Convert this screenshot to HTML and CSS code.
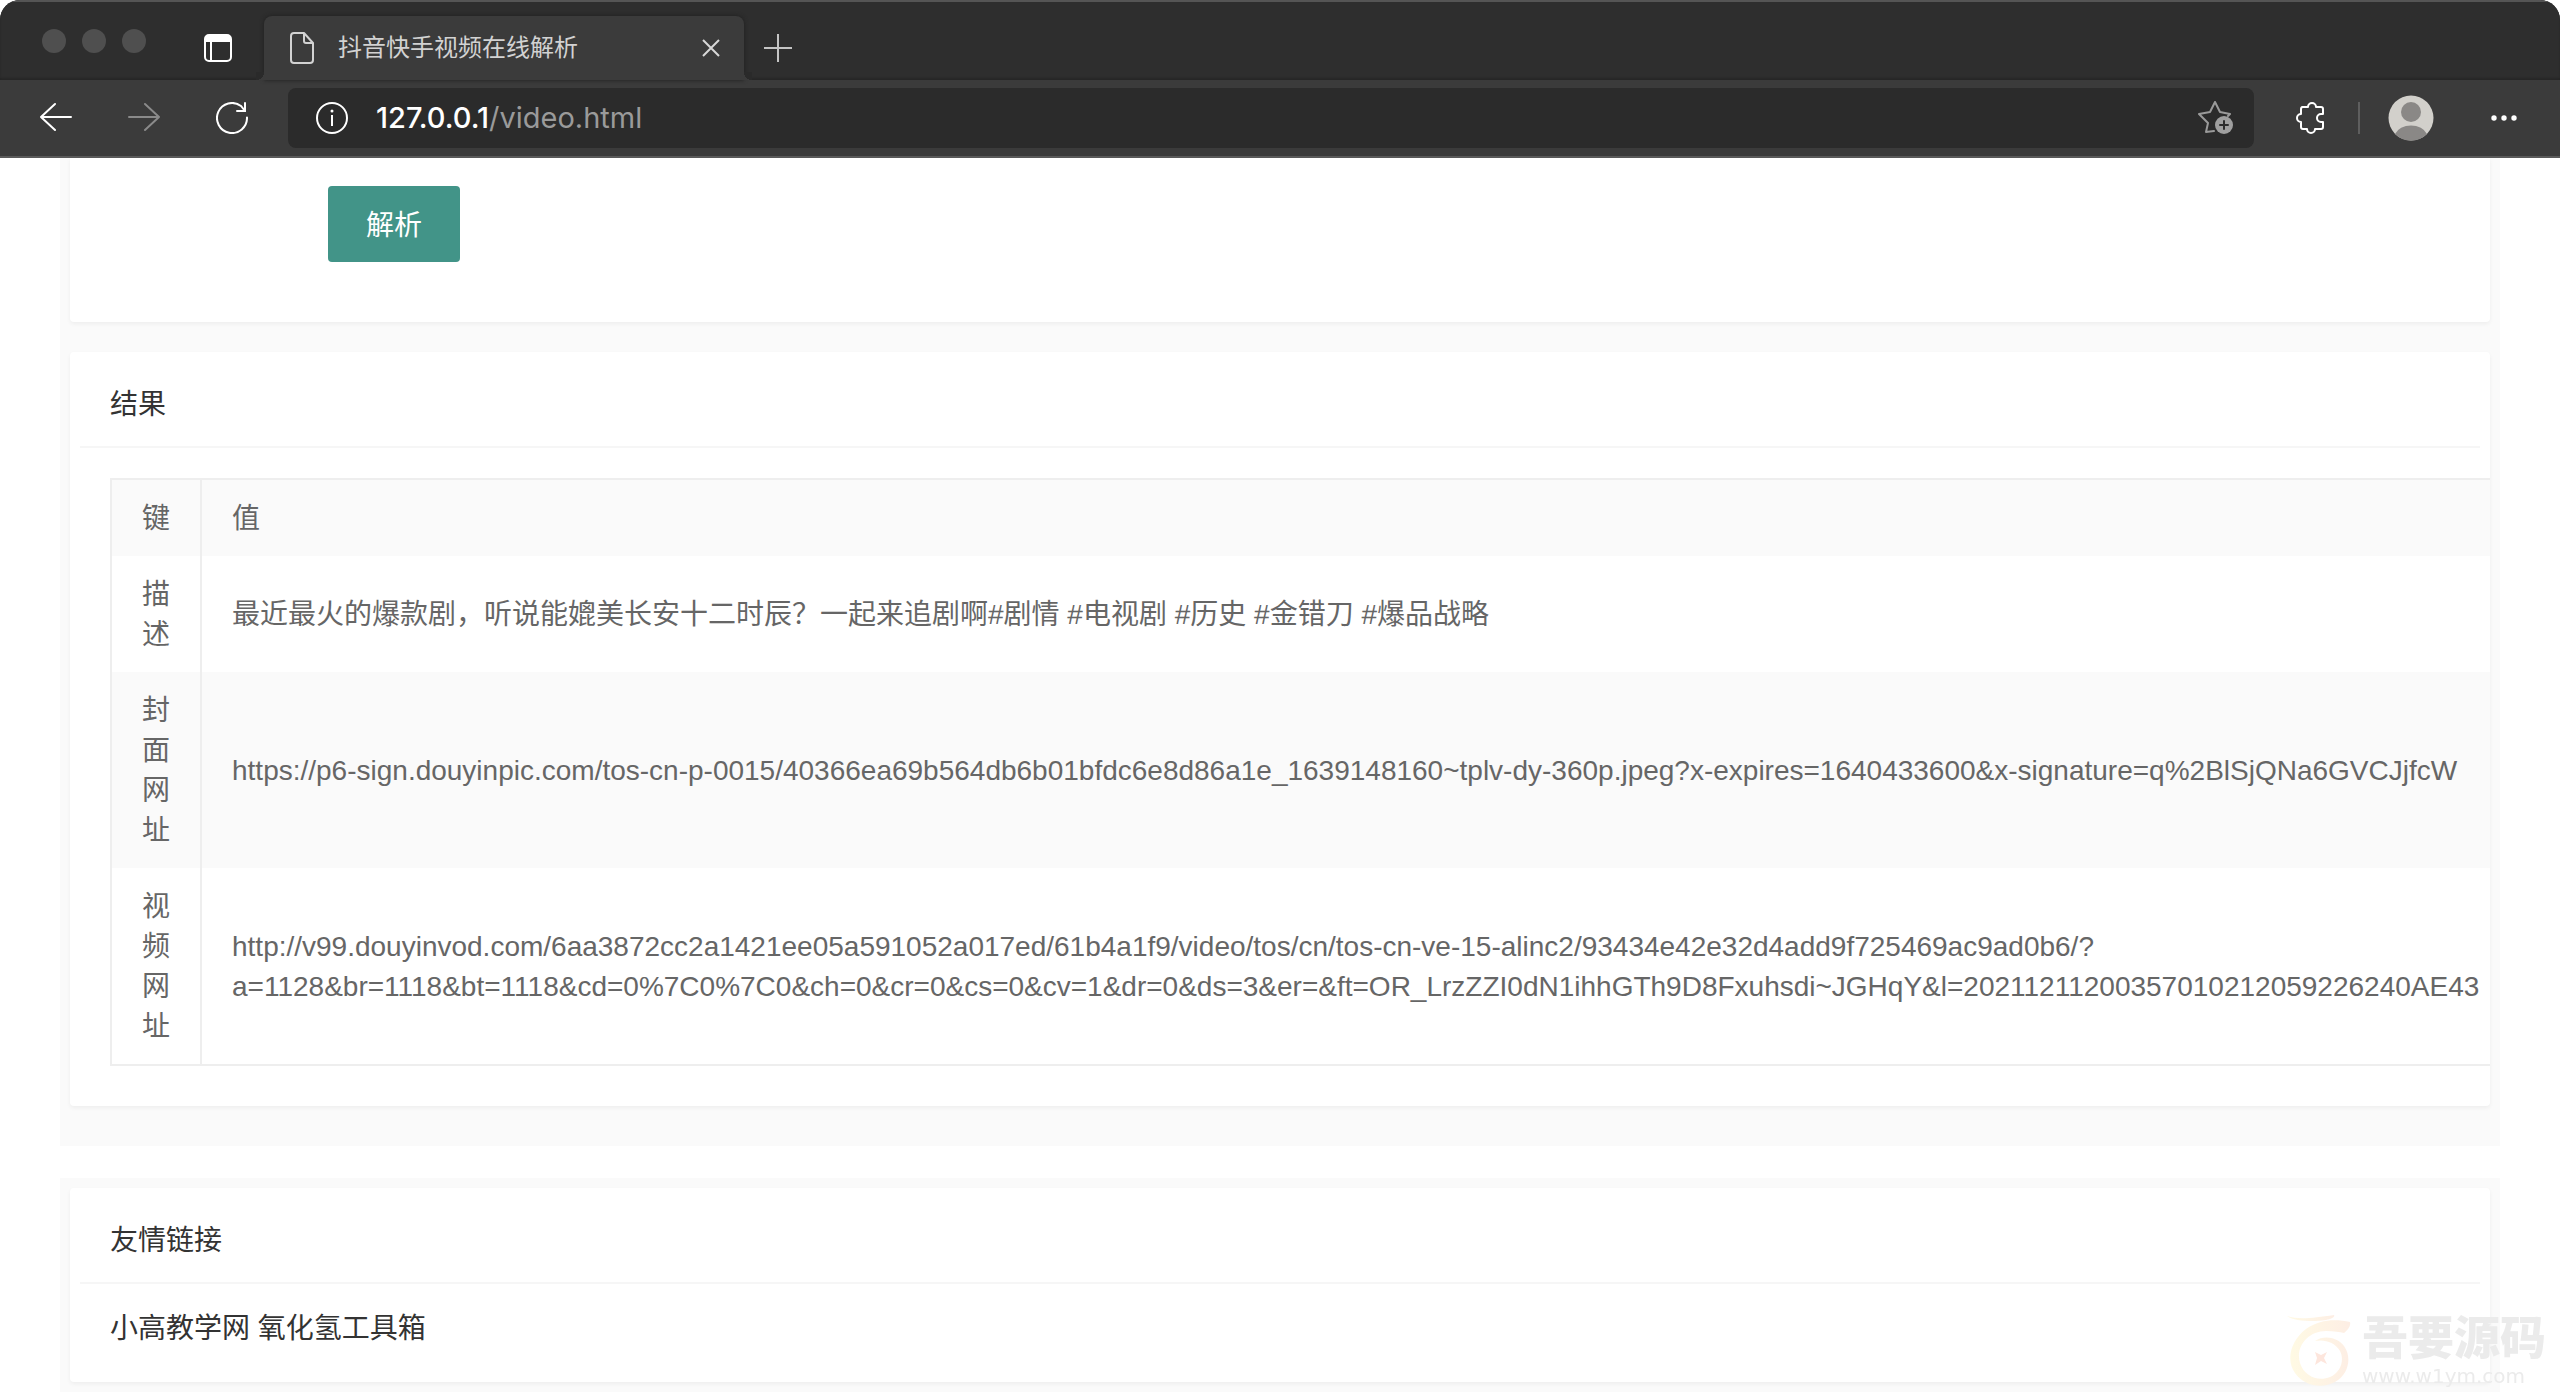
FILE: index.html
```html
<!DOCTYPE html>
<html lang="zh-CN">
<head>
<meta charset="utf-8">
<meta name="viewport" content="width=device-width, initial-scale=1">
<title>抖音快手视频在线解析</title>
<link rel="stylesheet" href="styles.css">
</head>
<body>
<header class="browser">
  <div class="tabstrip">
    <div class="lights"><span class="light"></span><span class="light"></span><span class="light"></span></div>
    <button class="icon-btn tab-actions" type="button" aria-label="标签页操作">
      <svg width="28" height="28" viewBox="0 0 28 28" fill="none" stroke="#fff" stroke-width="2"><rect x="1" y="1" width="26" height="26" rx="4"/><path d="M2 2h24v6H2z" fill="#fff" stroke="none"/><path d="M7 8v19"/></svg>
    </button>
    <div class="tab">
      <svg width="24" height="32" viewBox="0 0 24 32" fill="none" stroke="#d2d2d2" stroke-width="2" stroke-linejoin="round"><path d="M4 1h10l9 10v17a3 3 0 0 1-3 3H4a3 3 0 0 1-3-3V4a3 3 0 0 1 3-3z"/><path d="M14 1v8a2 2 0 0 0 2 2h7"/></svg>
      <span class="tab-title">抖音快手视频在线解析</span>
      <button class="icon-btn" type="button" aria-label="关闭标签页">
        <svg width="18" height="18" viewBox="0 0 18 18" fill="none" stroke="#d8d8d8" stroke-width="2"><path d="M1 1l16 16M17 1L1 17"/></svg>
      </button>
    </div>
    <button class="icon-btn new-tab" type="button" aria-label="新建标签页">
      <svg width="28" height="28" viewBox="0 0 28 28" fill="none" stroke="#c4c4c4" stroke-width="2"><path d="M14 0v28M0 14h28"/></svg>
    </button>
  </div>
  <div class="toolbar">
    <nav class="nav-buttons" aria-label="导航">
      <button class="icon-btn" type="button" aria-label="后退">
        <svg width="32" height="32" viewBox="0 0 32 32" fill="none" stroke="#fff" stroke-width="2" stroke-linecap="round" stroke-linejoin="round"><path d="M31 15H1M15 2L1 15l14 13"/></svg>
      </button>
      <button class="icon-btn" type="button" aria-label="前进">
        <svg width="32" height="32" viewBox="0 0 32 32" fill="none" stroke="#8a8a8a" stroke-width="2" stroke-linecap="round" stroke-linejoin="round"><path d="M1 15h30M17 2l14 13-14 13"/></svg>
      </button>
      <button class="icon-btn" type="button" aria-label="刷新">
        <svg width="32" height="32" viewBox="0 0 32 32" fill="none" stroke="#fff" stroke-width="2" stroke-linecap="round"><path d="M31 15.500A15 15 0 1 1 25 4l4 5"/><path d="M29 1v8h-8"/></svg>
      </button>
    </nav>
    <div class="address">
      <svg width="32" height="32" viewBox="0 0 32 32" fill="none" stroke="#fff" stroke-width="2"><circle cx="16" cy="16" r="15"/><path d="M16 13v11"/><circle cx="16" cy="9" r="1.500" fill="#fff" stroke="none"/></svg>
      <label class="url"><span class="url-host">127.0.0.1</span><input class="url-path" type="text" value="/video.html" aria-label="地址"></label>
      <button class="icon-btn" type="button" aria-label="添加到收藏夹">
        <svg width="36" height="34" viewBox="0 0 36 34" fill="none" stroke="#9a9a9a" stroke-width="2" stroke-linecap="round" stroke-linejoin="round"><path d="M16 30L8 31l2-9L1 13l11-2 5-10 5 10 10 2-2 2"/><circle cx="26" cy="24" r="9" fill="#9f9f9f" stroke="none"/><path d="M26 20v8M22 24h8" stroke="#2b2b2b"/></svg>
      </button>
    </div>
    <button class="icon-btn extensions" type="button" aria-label="扩展">
      <svg width="28" height="32" viewBox="0 0 28 32" fill="none" stroke="#fff" stroke-width="2" stroke-linejoin="round"><path d="M6 5h6a4 4 0 0 1 8 0h5q2 0 2 2v5h-2a4 4 0 0 0 0 8h2v5q0 2-2 2h-6a4 4 0 0 1-8 0H7q-2 0-2-2v-5a4 4 0 0 1 0-8V7q0-2 2-2z"/></svg>
    </button>
    <span class="divider"></span>
    <button class="icon-btn profile" type="button" aria-label="个人资料">
      <svg width="46" height="46" viewBox="0 0 46 46"><circle cx="23" cy="23" r="22.500" fill="#d2d0cb"/><circle cx="23" cy="17" r="10" fill="#8a8886"/><path d="M7 39a17 13 0 0 1 32 0 22.500 22.500 0 0 1-32 0z" fill="#8a8886"/></svg>
    </button>
    <button class="icon-btn more" type="button" aria-label="设置及其他">
      <svg width="28" height="8" viewBox="0 0 28 8" fill="#fff"><circle cx="4" cy="4" r="2.700"/><circle cx="14" cy="4" r="2.700"/><circle cx="24" cy="4" r="2.700"/></svg>
    </button>
  </div>
</header>

<main class="panel panel-results">
  <section class="card card-form">
    <button class="submit" type="button">解析</button>
  </section>
  <section class="card">
    <h2 class="card-header">结果</h2>
    <div class="card-body">
      <table class="result">
        <colgroup><col class="col-key"><col></colgroup>
        <thead>
          <tr><th>键</th><th>值</th></tr>
        </thead>
        <tbody>
          <tr><td>描述</td><td>最近最火的爆款剧，听说能媲美长安十二时辰？一起来追剧啊#剧情 #电视剧 #历史 #金错刀 #爆品战略</td></tr>
          <tr><td>封面网址</td><td>https://p6-sign.douyinpic.com/tos-cn-p-0015/40366ea69b564db6b01bfdc6e8d86a1e_1639148160~tplv-dy-360p.jpeg?x-expires=1640433600&amp;x-signature=q%2BlSjQNa6GVCJjfcW</td></tr>
          <tr><td>视频网址</td><td>http://v99.douyinvod.com/6aa3872cc2a1421ee05a591052a017ed/61b4a1f9/video/tos/cn/tos-cn-ve-15-alinc2/93434e42e32d4add9f725469ac9ad0b6/?<br>a=1128&amp;br=1118&amp;bt=1118&amp;cd=0%7C0%7C0&amp;ch=0&amp;cr=0&amp;cs=0&amp;cv=1&amp;dr=0&amp;ds=3&amp;er=&amp;ft=OR_LrzZZI0dN1ihhGTh9D8Fxuhsdi~JGHqY&amp;l=20211211200357010212059226240AE43</td></tr>
        </tbody>
      </table>
    </div>
  </section>
</main>

<footer class="panel panel-links">
  <section class="card">
    <h2 class="card-header">友情链接</h2>
    <div class="card-body links"><a href="#">小高教学网</a> <a href="#">氧化氢工具箱</a></div>
  </section>
</footer>

<aside class="watermark">
  <svg width="68" height="74" viewBox="0 0 68 74" fill="none">
    <defs><linearGradient id="gold" x1="0" y1="0" x2="1" y2="0"><stop offset="0" stop-color="#fffae4"/><stop offset="1" stop-color="#fdeee4"/></linearGradient></defs>
    <path d="M1 3c12 4 26 2 47-1 2 3-8 6-20 6C16 8 6 7 1 3z" fill="url(#gold)"/>
    <path d="M64 9C50 6 34 6 20 16 4 28 0 48 9 60c9 13 27 16 40 9 14-8 17-25 9-36-7-9-20-11-29-5 9-2 20 1 25 10 5 10 0 22-10 26-12 5-26-1-30-14C9 34 22 18 40 18c8 0 14 1 18 2 4-3 7-7 6-11z" fill="url(#gold)"/>
    <path d="M29 39l6 3 6-3-3 6 3 6-6-3-6 4 2-7z" fill="#fde6dd"/>
  </svg>
  <div class="watermark-text"><span class="watermark-name">吾要源码</span><span class="watermark-site">www.w1ym.com</span></div>
</aside>
</body>
</html>
```

FILE: styles.css
```css
* {
  box-sizing: border-box;
}

html {
  overflow: hidden;
}

body {
  margin: 0;
  background: #fff;
  color: #333;
  font: 28px/48px "Liberation Sans", "Noto Sans CJK SC", sans-serif;
}

button,
input {
  font: inherit;
  border: 0;
  padding: 0;
  background: none;
}

svg {
  display: block;
  flex: none;
}

/* Browser window */
.browser {
  border-radius: 20px 20px 0 0;
  overflow: hidden;
  background: #3b3b3b;
  border-bottom: 2px solid #5a5a5a;
}

.icon-btn {
  flex: none;
  display: block;
}

.tabstrip {
  display: flex;
  align-items: center;
  height: 80px;
  padding: 16px 0 0 42px;
  background: #2e2e2e;
  box-shadow: inset 0 2px #555, inset 0 -2px 2px #262626;
}

.lights {
  display: flex;
  gap: 16px;
  margin-bottom: 14px;
}

.light {
  width: 24px;
  height: 24px;
  border-radius: 50%;
  background: #4f4f4f;
}

.tab-actions {
  margin: 0 32px 0 58px;
}

.tab {
  position: relative;
  display: flex;
  align-items: center;
  gap: 24px;
  width: 480px;
  height: 64px;
  padding: 0 24px 0 26px;
  border-radius: 8px 8px 0 0;
  background: #3b3b3b;
  box-shadow: 0 0 4px #1e1e1e;
}

.tab::before,
.tab::after {
  content: "";
  position: absolute;
  bottom: 0;
  width: 8px;
  height: 8px;
}

.tab::before {
  right: 100%;
  background: radial-gradient(circle at 0 0, #2a2a2a 8px, #3b3b3b 8px);
}

.tab::after {
  left: 100%;
  background: radial-gradient(circle at 100% 0, #2a2a2a 8px, #3b3b3b 8px);
}

.tab-title {
  flex: 1;
  color: #d2d2d2;
  font-size: 24px;
  line-height: 32px;
  white-space: nowrap;
}

.new-tab {
  margin-left: 20px;
}

.toolbar {
  display: flex;
  align-items: center;
  padding: 8px 42px 8px 40px;
}

.nav-buttons {
  display: flex;
  gap: 56px;
}

.address {
  flex: 1;
  display: flex;
  align-items: center;
  gap: 28px;
  height: 60px;
  margin: 0 42px 0 40px;
  padding: 0 20px 0 28px;
  border-radius: 8px;
  background: #2b2b2b;
}

.url {
  flex: 1;
  display: flex;
  align-items: center;
  font-family: Inter, sans-serif;
  font-size: 29px;
  line-height: 40px;
}

.url-host {
  color: #fff;
  font-weight: 500;
}

.url-path {
  flex: 1;
  min-width: 0;
  color: #9a9a9a;
}

.divider {
  width: 2px;
  height: 32px;
  margin: 0 28px 0 34px;
  background: #5e5e5e;
}

.more {
  margin-left: 56px;
}

/* Page */
.panel {
  margin: 0 60px;
  padding: 0 10px 40px;
  background: #fafafa;
}

.panel-results {
  display: grid;
  grid-template-columns: minmax(0, 1fr);
  gap: 30px;
}

.panel-links {
  margin-top: 32px;
  padding-top: 10px;
}

.card {
  overflow: hidden;
  padding: 10px;
  border-radius: 4px;
  background: #fff;
  box-shadow: 0 2px 4px rgba(0, 0, 0, 0.05);
}

.card-form {
  padding: 28px 10px 60px 258px;
  border-radius: 0 0 4px 4px;
}

.submit {
  display: block;
  padding: 4px 38px 0;
  border-radius: 4px;
  background: #429488;
  color: #fff;
  line-height: 72px;
}

.card-header {
  margin: 0;
  padding: 2px 30px 0;
  border-bottom: 2px solid #f6f6f6;
  font-size: 28px;
  font-weight: 400;
  line-height: 82px;
}

.card-body {
  padding: 30px;
}

.links {
  padding: 21px 30px 19px;
}

.links a {
  color: #333;
  text-decoration: none;
}

/* The table runs past the card and is cut off at its edge */
.result {
  width: calc(100% + 60px);
  table-layout: fixed;
  border: 2px solid #eee;
  border-collapse: separate;
  border-spacing: 0;
  color: #666;
  line-height: 40px;
}

.col-key {
  width: 90px;
}

.result th,
.result td {
  padding: 19px 30px 17px;
  font-weight: 400;
  text-align: left;
  white-space: nowrap;
}

.result th:first-child,
.result td:first-child {
  border-right: 2px solid #eee;
  white-space: normal;
}

.result thead tr,
.result tbody tr:nth-child(even) {
  background: #fafafa;
}

/* Site mark in the corner of the window */
.watermark {
  position: fixed;
  right: 14px;
  bottom: 4px;
  display: flex;
  align-items: center;
  gap: 8px;
  color: #ebebeb;
}

.watermark-text {
  display: grid;
}

.watermark-name {
  font-size: 46px;
  font-weight: 900;
  line-height: 52px;
}

.watermark-site {
  font-family: "DejaVu Sans", sans-serif;
  font-size: 20px;
  line-height: 24px;
}
```
